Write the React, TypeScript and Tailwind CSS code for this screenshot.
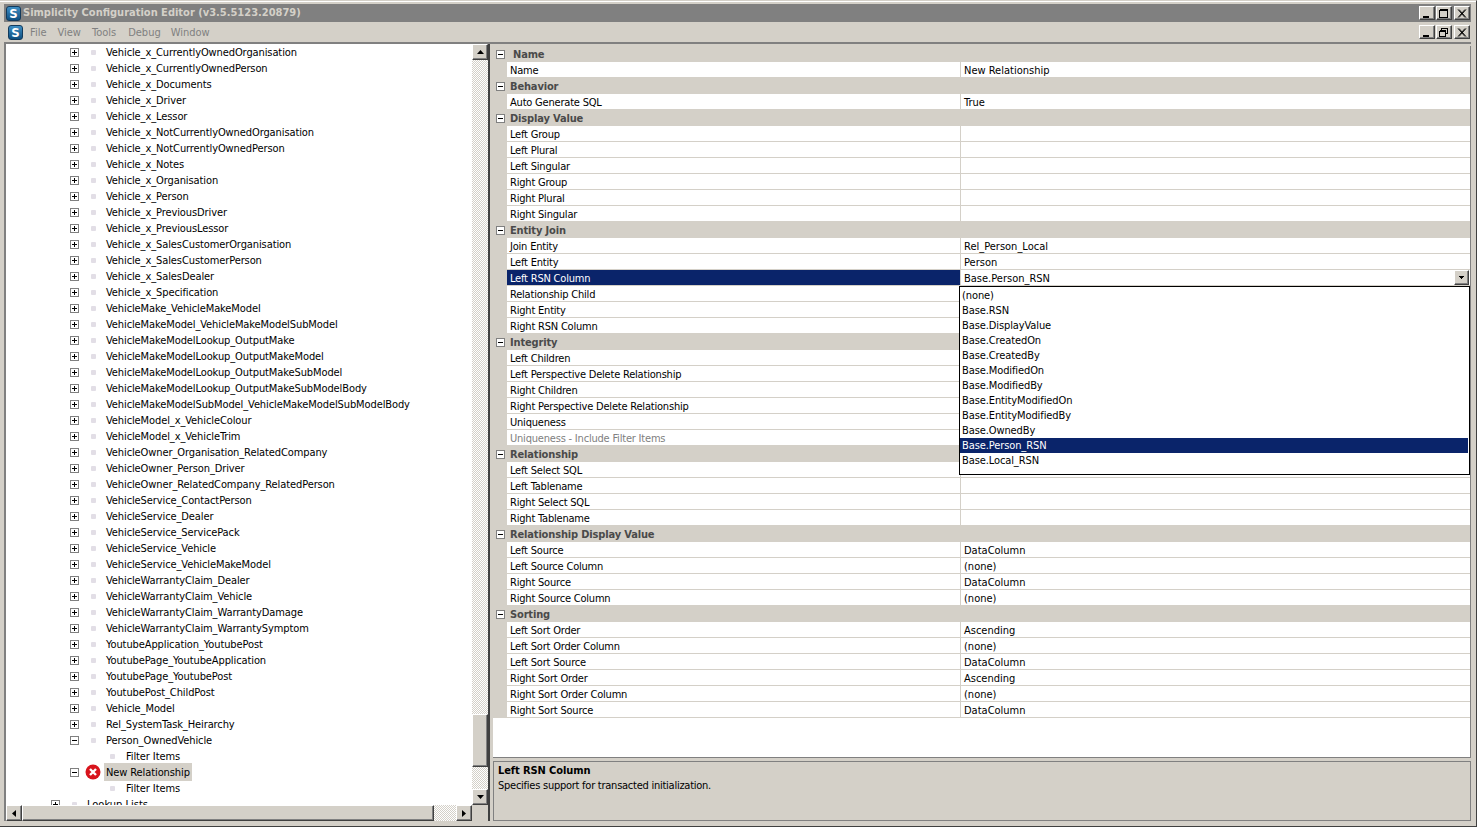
import React from "react";

const FONT = "font-['DejaVu_Sans_Condensed','Liberation_Sans',sans-serif]";
const RAISED = "border border-t-white border-l-white border-r-[#404040] border-b-[#404040] bg-[#d4d0c8] shadow-[inset_-1px_-1px_0_#808080]";
const DITHER = "bg-[repeating-conic-gradient(#d4d0c8_0_25%,#ffffff_0_50%)] bg-[length:2px_2px]";

const treeNames = [
  "Vehicle_x_CurrentlyOwnedOrganisation", "Vehicle_x_CurrentlyOwnedPerson", "Vehicle_x_Documents", "Vehicle_x_Driver",
  "Vehicle_x_Lessor", "Vehicle_x_NotCurrentlyOwnedOrganisation", "Vehicle_x_NotCurrentlyOwnedPerson", "Vehicle_x_Notes",
  "Vehicle_x_Organisation", "Vehicle_x_Person", "Vehicle_x_PreviousDriver", "Vehicle_x_PreviousLessor",
  "Vehicle_x_SalesCustomerOrganisation", "Vehicle_x_SalesCustomerPerson", "Vehicle_x_SalesDealer", "Vehicle_x_Specification",
  "VehicleMake_VehicleMakeModel", "VehicleMakeModel_VehicleMakeModelSubModel", "VehicleMakeModelLookup_OutputMake",
  "VehicleMakeModelLookup_OutputMakeModel", "VehicleMakeModelLookup_OutputMakeSubModel", "VehicleMakeModelLookup_OutputMakeSubModelBody",
  "VehicleMakeModelSubModel_VehicleMakeModelSubModelBody", "VehicleModel_x_VehicleColour", "VehicleModel_x_VehicleTrim",
  "VehicleOwner_Organisation_RelatedCompany", "VehicleOwner_Person_Driver", "VehicleOwner_RelatedCompany_RelatedPerson",
  "VehicleService_ContactPerson", "VehicleService_Dealer", "VehicleService_ServicePack", "VehicleService_Vehicle",
  "VehicleService_VehicleMakeModel", "VehicleWarrantyClaim_Dealer", "VehicleWarrantyClaim_Vehicle", "VehicleWarrantyClaim_WarrantyDamage",
  "VehicleWarrantyClaim_WarrantySymptom", "YoutubeApplication_YoutubePost", "YoutubePage_YoutubeApplication", "YoutubePage_YoutubePost",
  "YoutubePost_ChildPost", "Vehicle_Model", "Rel_SystemTask_Heirarchy",
];

type Group = { title: string; rows: [string, string?][] };
const groups: Group[] = [
  { title: "Name", rows: [["Name", "New Relationship"]] },
  { title: "Behavior", rows: [["Auto Generate SQL", "True"]] },
  { title: "Display Value", rows: [["Left Group"], ["Left Plural"], ["Left Singular"], ["Right Group"], ["Right Plural"], ["Right Singular"]] },
  { title: "Entity Join", rows: [["Join Entity", "Rel_Person_Local"], ["Left Entity", "Person"], ["Left RSN Column", "Base.Person_RSN"], ["Relationship Child"], ["Right Entity"], ["Right RSN Column"]] },
  { title: "Integrity", rows: [["Left Children"], ["Left Perspective Delete Relationship"], ["Right Children"], ["Right Perspective Delete Relationship"], ["Uniqueness"], ["Uniqueness - Include Filter Items"]] },
  { title: "Relationship", rows: [["Left Select SQL"], ["Left Tablename"], ["Right Select SQL"], ["Right Tablename"]] },
  { title: "Relationship Display Value", rows: [["Left Source", "DataColumn"], ["Left Source Column", "(none)"], ["Right Source", "DataColumn"], ["Right Source Column", "(none)"]] },
  { title: "Sorting", rows: [["Left Sort Order", "Ascending"], ["Left Sort Order Column", "(none)"], ["Left Sort Source", "DataColumn"], ["Right Sort Order", "Ascending"], ["Right Sort Order Column", "(none)"], ["Right Sort Source", "DataColumn"]] },
];

const options = ["(none)", "Base.RSN", "Base.DisplayValue", "Base.CreatedOn", "Base.CreatedBy", "Base.ModifiedOn", "Base.ModifiedBy", "Base.EntityModifiedOn", "Base.EntityModifiedBy", "Base.OwnedBy", "Base.Person_RSN", "Base.Local_RSN"];

function Logo() {
  return (
    <div className="w-[15px] h-[15px] shrink-0 rounded-[3px] bg-gradient-to-b from-[#3f8fc4] to-[#0d4f80] border border-[#123a5c] flex items-center justify-center text-white font-bold text-[13px] leading-none">
      S
    </div>
  );
}

function Expander({ open }: { open?: boolean }) {
  return (
    <svg width="9" height="9" viewBox="0 0 9 9" className="shrink-0 block" shapeRendering="crispEdges">
      <rect x="0.5" y="0.5" width="8" height="8" fill="#fff" stroke="#808080" />
      <path d={open ? "M2 4.5H7" : "M2 4.5H7M4.5 2V7"} stroke="#000" />
    </svg>
  );
}

function WinGlyph({ kind }: { kind: "min" | "max" | "restore" | "close" }) {
  return (
    <svg width="10" height="9" viewBox="0 0 10 9" shapeRendering="crispEdges">
      {kind === "min" && <rect x="1" y="7" width="6" height="2" fill="#000" />}
      {kind === "max" && <path d="M0.5 1.5H8.5V8.5H0.5ZM0.5 0.5H8.5" fill="none" stroke="#000" />}
      {kind === "restore" && <path d="M2.5 2.5V0.5H8.5V5.5H6.5M0.5 3.5H6.5V8.5H0.5ZM0.5 2.5H6.5M2.5 0.5H8.5" fill="none" stroke="#000" />}
      {kind === "close" && <path d="M1 0.5L8 8.5M2 0.5L9 8.5M8 0.5L1 8.5M9 0.5L2 8.5" stroke="#000" shapeRendering="auto" strokeWidth="0.9" />}
    </svg>
  );
}

function WinButtons({ second }: { second: "max" | "restore" }) {
  return (
    <div className="flex items-center gap-[1px]">
      <div className={`w-[16px] h-[14px] flex items-center justify-center ${RAISED}`}><WinGlyph kind="min" /></div>
      <div className={`w-[16px] h-[14px] flex items-center justify-center ${RAISED}`}><WinGlyph kind={second} /></div>
      <div className={`w-[16px] h-[14px] ml-[1px] flex items-center justify-center ${RAISED}`}><WinGlyph kind="close" /></div>
    </div>
  );
}

function Dot() {
  return <div className="w-[5px] h-[5px] shrink-0 rounded-[1px] bg-[#e2dee6]" />;
}

function TreeRow({ name, open }: { name: string; open?: boolean }) {
  return (
    <div className="h-4 flex items-center pl-[64px]">
      <Expander open={open} />
      <div className="ml-[12px]"><Dot /></div>
      <span className="ml-[10px] pt-[2px] whitespace-nowrap tracking-[-0.1px]">{name}</span>
    </div>
  );
}

function ChildRow() {
  return (
    <div className="h-4 flex items-center pl-[104px]">
      <Dot />
      <span className="ml-[11px] pt-[2px] whitespace-nowrap tracking-[-0.1px]">Filter Items</span>
    </div>
  );
}

function Arrow({ dir }: { dir: "up" | "down" | "left" | "right" }) {
  const d = { up: "M3.5 1L0 5H7Z", down: "M0 1H7L3.5 5Z", left: "M5 0V7L1 3.5Z", right: "M1 0V7L5 3.5Z" }[dir];
  const size = dir === "up" || dir === "down" ? { w: 7, h: 6 } : { w: 6, h: 7 };
  return (
    <svg width={size.w} height={size.h} viewBox={`0 0 ${size.w} ${size.h}`}>
      <path d={d} fill="#000" />
    </svg>
  );
}

function Tree() {
  return (
    <div className="w-[484px] shrink-0 flex flex-col border-l-2 border-[#808080] bg-white min-h-0">
      <div className="flex-1 flex min-h-0">
        <div className="flex-1 overflow-hidden min-w-0">
          {treeNames.map((n) => <TreeRow key={n} name={n} />)}
          <TreeRow name="Person_OwnedVehicle" open />
          <ChildRow />
          <div className="h-4 flex items-center pl-[64px]">
            <Expander open />
            <svg width="16" height="16" viewBox="0 0 16 16" className="ml-[6px] shrink-0">
              <circle cx="8" cy="8" r="7.5" fill="#d8141c" />
              <path d="M5 5L11 11M11 5L5 11" stroke="#fff" strokeWidth="2.4" />
            </svg>
            <span className="ml-[3px] px-[2px] pt-[2px] bg-[#d4d0c8] whitespace-nowrap tracking-[-0.1px]">New Relationship</span>
          </div>
          <ChildRow />
          <div className="h-4 flex items-center pl-[45px]">
            <Expander />
            <div className="ml-[12px]"><Dot /></div>
            <span className="ml-[10px] pt-[2px] whitespace-nowrap">Lookup Lists</span>
          </div>
        </div>
        <div className="w-4 shrink-0 flex flex-col">
          <div className={`h-4 flex items-center justify-center ${RAISED}`}><Arrow dir="up" /></div>
          <div className={`h-[654px] ${DITHER}`} />
          <div className={`h-[53px] ${RAISED}`} />
          <div className={`flex-1 ${DITHER}`} />
          <div className={`h-4 flex items-center justify-center ${RAISED}`}><Arrow dir="down" /></div>
        </div>
      </div>
      <div className="h-4 shrink-0 flex">
        <div className={`w-4 flex items-center justify-center ${RAISED}`}><Arrow dir="left" /></div>
        <div className={`w-[412px] ${RAISED}`} />
        <div className={`w-[22px] ${DITHER}`} />
        <div className={`w-4 flex items-center justify-center ${RAISED}`}><Arrow dir="right" /></div>
        <div className="flex-1 bg-[#d4d0c8]" />
      </div>
    </div>
  );
}

function PropRow({ label, value }: { label: string; value?: string }) {
  const selected = label === "Left RSN Column";
  const disabled = label === "Uniqueness - Include Filter Items";
  return (
    <div className="h-4 flex pl-[14px] bg-[#d4d0c8]">
      <div className={`w-[453px] shrink-0 pl-[3px] whitespace-nowrap leading-[17px] tracking-[-0.2px] border-b border-[#d4d0c8] ${selected ? "bg-[#0a246a] text-white" : disabled ? "bg-white text-[#808080]" : "bg-white"}`}>
        {label}
      </div>
      <div className="flex-1 ml-[1px] flex bg-white border-b border-[#d4d0c8]">
        <div className="flex-1 pl-[3px] whitespace-nowrap leading-[17px]">{value}</div>
        {selected && (
          <div className={`w-[15px] h-[15px] mr-[1px] flex items-center justify-center ${RAISED}`}>
            <svg width="5" height="4" viewBox="0 0 5 4"><path d="M0 0H5V1H4V2H3V3H2V2H1V1H0Z" fill="#000" /></svg>
          </div>
        )}
      </div>
    </div>
  );
}

function PropGrid() {
  return (
    <div className="flex-1 flex flex-col min-w-0 min-h-0">
      <div className="h-[712px] shrink-0 relative bg-white border-b border-r border-[#808080] mt-[2px]">
        {groups.map((g, i) => (
          <div key={g.title}>
            <div className="h-4 flex items-center bg-[#d4d0c8]">
              <div className="w-[17px] shrink-0 flex justify-start pl-[3px]"><Expander open /></div>
              <span className={`font-bold text-[#4a4a4a] whitespace-nowrap pt-[2px] tracking-[-0.15px] ${i === 0 ? "ml-[3px]" : ""}`}>{g.title}</span>
            </div>
            {g.rows.map((r) => <PropRow key={r[0]} label={r[0]} value={r[1]} />)}
          </div>
        ))}
        <div className="absolute left-[466px] top-[240px] w-[511px] h-[189px] bg-white border border-black pt-[1px] pr-[1px]">
          {options.map((o) => (
            <div key={o} className={`h-[15px] pl-[2px] leading-[15px] whitespace-nowrap tracking-[-0.1px] ${o === "Base.Person_RSN" ? "bg-[#0a246a] text-white" : ""}`}>{o}</div>
          ))}
        </div>
      </div>
      <div className="flex-1 mt-[3px] border border-[#808080] bg-[#d4d0c8] pl-[4px] pt-[1px] min-h-0">
        <div className="font-bold text-black h-[15px] leading-[15px] tracking-[-0.1px]">Left RSN Column</div>
        <div className="h-[15px] leading-[15px] tracking-[-0.25px]">Specifies support for transacted initialization.</div>
      </div>
    </div>
  );
}

export default function App() {
  return (
    <div className={`${FONT} w-[1477px] h-[827px] overflow-hidden flex flex-col bg-[#d4d0c8] text-black text-[11px] border-t-[1px] border-t-[#d4d0c8] border-r border-b border-r-[#404040] border-b-[#404040]`}>
      <div className="h-[3px] shrink-0 border-t border-white" />
      <div className="h-[18px] shrink-0 ml-[4px] mr-[5px] bg-[#808080] flex items-center pl-[2px] pr-[1px]">
        <Logo />
        <span className="ml-[2px] font-bold text-[#d4d0c8] text-[11px] whitespace-nowrap">Simplicity Configuration Editor (v3.5.5123.20879)</span>
        <div className="ml-auto"><WinButtons second="max" /></div>
      </div>
      <div className="h-[20px] shrink-0 ml-[4px] mr-[5px] flex items-center pl-[4px] pr-[1px] text-[#808080]">
        <Logo />
        <span className="ml-[7px] pt-[2px]">File</span>
        <span className="ml-[11px] pt-[2px]">View</span>
        <span className="ml-[11px] pt-[2px]">Tools</span>
        <span className="ml-[12px] pt-[2px]">Debug</span>
        <span className="ml-[10px] pt-[2px]">Window</span>
        <div className="ml-auto"><WinButtons second="restore" /></div>
      </div>
      <div className="flex-1 flex min-h-0 ml-[4px] mr-[5px] mb-[5px] border-t-2 border-[#808080]">
        <Tree />
        <div className="w-[5px] shrink-0 bg-[#d4d0c8] border-l-2 border-[#404040]" />
        <PropGrid />
      </div>
    </div>
  );
}
